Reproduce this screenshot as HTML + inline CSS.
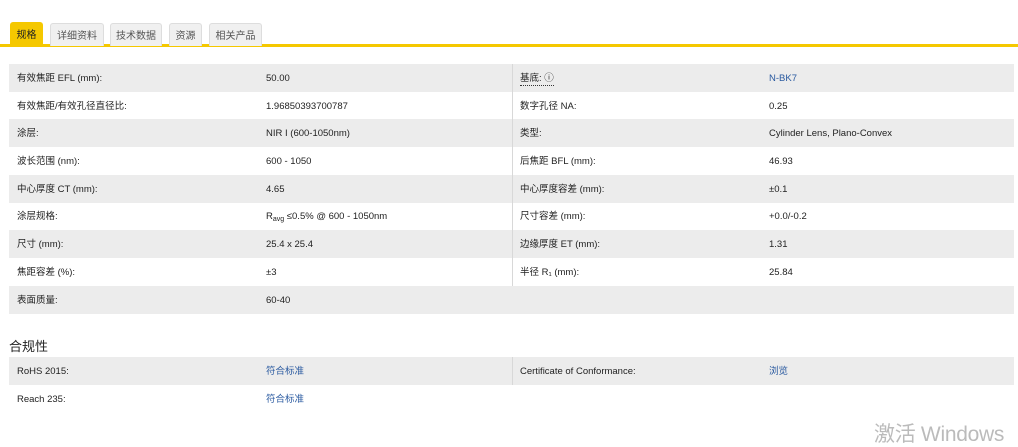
<!DOCTYPE html>
<html><head><meta charset="utf-8"><style>
*{margin:0;padding:0;box-sizing:border-box}
body{width:1018px;height:439px;background:#fff;font-family:"Liberation Sans","Noto Sans CJK SC",sans-serif;font-size:9.5px;color:#222;position:relative;overflow:hidden}
.tabs{position:absolute;top:22px;left:0;width:1018px;height:25px;border-bottom:3px solid #f5c800}
.tab{position:absolute;top:1px;height:23px;background:#f0f0f0;border:1px solid #ddd;border-bottom:none;border-radius:3px 3px 0 0;color:#555;font-size:10px;line-height:25px;text-align:center}
.tab.on{background:#f5c800;border-color:#f5c800;color:#222;top:0;height:24px}
.row{position:absolute;left:9px;width:1005px;height:28px;line-height:30px}
.row.g{background:#ececec}
.row span{position:absolute;top:0;white-space:nowrap}
.a{left:8px}.b{left:257px}.c{left:511px}.d{left:760px}
.div{position:absolute;left:503px;top:0;width:1px;height:28px;background:#d8d8d8}
a{color:#2a5aa0;text-decoration:none}
sub{font-size:7px;line-height:0;vertical-align:-2px}
h3{position:absolute;left:9px;top:336px;font-size:13px;font-weight:normal;color:#222}
.wm{position:absolute;left:874px;top:423px;font-size:21px;color:#bbb;line-height:24px;letter-spacing:-0.3px}
</style></head><body>
<div class="tabs">
<div class="tab on" style="left:10px;width:33px">规格</div>
<div class="tab" style="left:50px;width:54px">详细资料</div>
<div class="tab" style="left:110px;width:52px">技术数据</div>
<div class="tab" style="left:169px;width:33px">资源</div>
<div class="tab" style="left:209px;width:53px">相关产品</div>
</div>
<div class="row g" style="top:64px"><span class="a">有效焦距 EFL (mm):</span><span class="b">50.00</span><i class="div"></i><span class="c"><u style="text-decoration:none;border-bottom:1px dotted #333;line-height:12px;display:inline-block">基底: ⓘ</u></span><span class="d"><a>N-BK7</a></span></div>
<div class="row" style="top:92px"><span class="a">有效焦距/有效孔径直径比:</span><span class="b">1.96850393700787</span><i class="div"></i><span class="c">数字孔径 NA:</span><span class="d">0.25</span></div>
<div class="row g" style="top:119px"><span class="a">涂层:</span><span class="b">NIR I (600-1050nm)</span><i class="div"></i><span class="c">类型:</span><span class="d">Cylinder Lens, Plano-Convex</span></div>
<div class="row" style="top:147px"><span class="a">波长范围 (nm):</span><span class="b">600 - 1050</span><i class="div"></i><span class="c">后焦距 BFL (mm):</span><span class="d">46.93</span></div>
<div class="row g" style="top:175px"><span class="a">中心厚度 CT (mm):</span><span class="b">4.65</span><i class="div"></i><span class="c">中心厚度容差 (mm):</span><span class="d">±0.1</span></div>
<div class="row" style="top:202px"><span class="a">涂层规格:</span><span class="b">R<sub>avg</sub> ≤0.5% @ 600 - 1050nm</span><i class="div"></i><span class="c">尺寸容差 (mm):</span><span class="d">+0.0/-0.2</span></div>
<div class="row g" style="top:230px"><span class="a">尺寸 (mm):</span><span class="b">25.4 x 25.4</span><i class="div"></i><span class="c">边缘厚度 ET (mm):</span><span class="d">1.31</span></div>
<div class="row" style="top:258px"><span class="a">焦距容差 (%):</span><span class="b">±3</span><i class="div"></i><span class="c">半径 R₁ (mm):</span><span class="d">25.84</span></div>
<div class="row g" style="top:286px"><span class="a">表面质量:</span><span class="b">60-40</span></div>
<h3>合规性</h3>
<div class="row g" style="top:357px"><span class="a">RoHS 2015:</span><span class="b"><a>符合标准</a></span><i class="div"></i><span class="c">Certificate of Conformance:</span><span class="d"><a>浏览</a></span></div>
<div class="row" style="top:385px"><span class="a">Reach 235:</span><span class="b"><a>符合标准</a></span></div>
<div class="wm">激活 Windows</div>
</body></html>
